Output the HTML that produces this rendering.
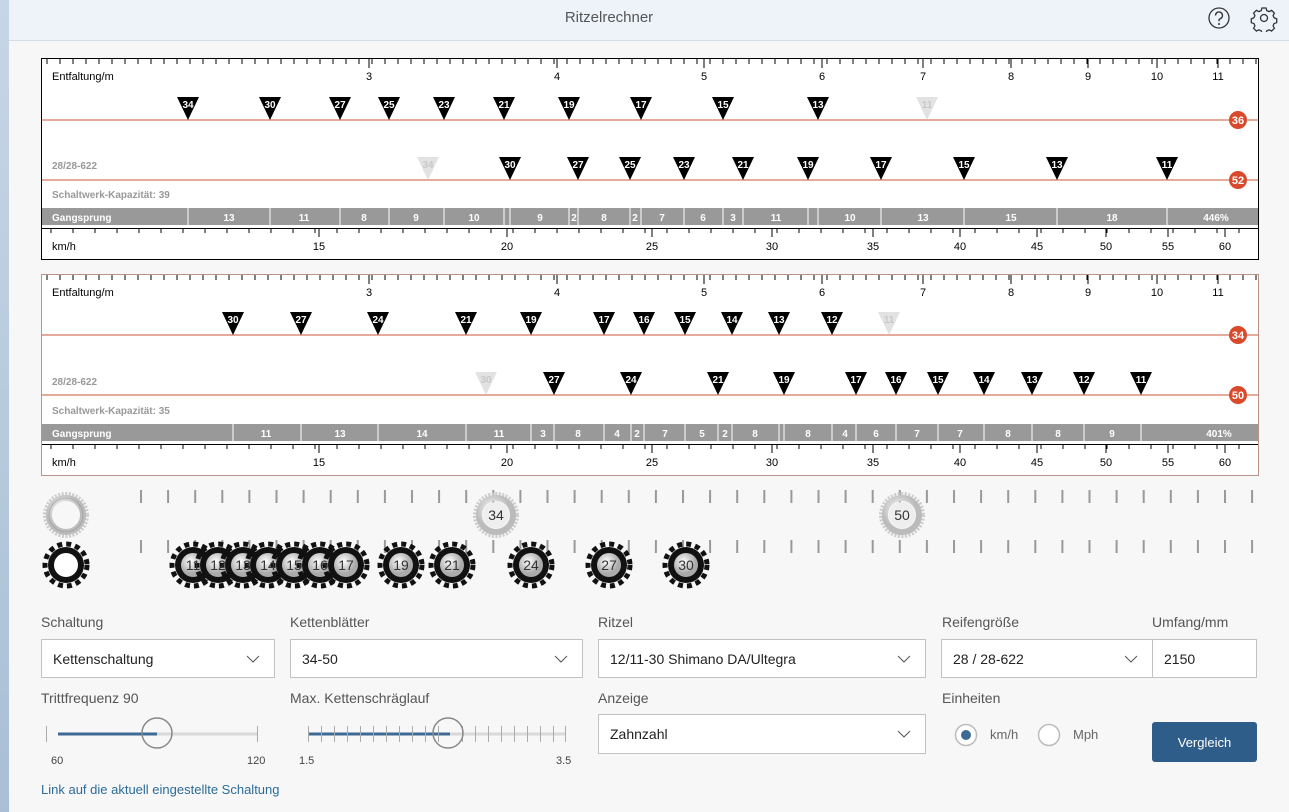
<!DOCTYPE html>
<html><head><meta charset="utf-8">
<style>
*{box-sizing:border-box;margin:0;padding:0}
body{width:1289px;height:812px;overflow:hidden;background:#f7f7f7;font-family:"Liberation Sans",sans-serif;position:relative}
.strip{position:absolute;left:0;top:0;width:9px;height:812px;background:linear-gradient(#c7d6e6,#a9bfd6)}
.hdr{position:absolute;left:9px;top:0;width:1280px;height:41px;background:#eef3f9;border-bottom:1px solid #d5dde6}
.hdr .t{position:absolute;left:0;width:1200px;text-align:center;top:9px;font-size:15px;color:#555}
.lbl{position:absolute;font-size:14px;color:#555}
.sel{position:absolute;background:#fff;border:1px solid #c2c2c2;font-size:14px;color:#222;padding:0 11px;display:flex;align-items:center}
.sel svg{position:absolute;right:14px;top:50%;margin-top:-4px}
.small{position:absolute;font-size:11px;color:#444}
</style></head><body>
<div class="strip"></div>
<div class="hdr"><div class="t">Ritzelrechner</div>
<svg style="position:absolute;left:1198px;top:6px" width="80" height="26" viewBox="0 0 80 26">
<circle cx="12" cy="12" r="10" fill="none" stroke="#333" stroke-width="1.3"/>
<path d="M8.5 9.5a3.5 3.5 0 1 1 4.5 3.3c-.8.3-1 .9-1 1.7v.8" fill="none" stroke="#333" stroke-width="1.4"/>
<circle cx="12" cy="18" r="1" fill="#333"/>
<g transform="translate(57,12)" fill="none" stroke="#333" stroke-width="1.3">
<circle r="3.5"/>
<path d="M-2 -10h4l.8 2.6 2.4 1 2.4-1.3 2.8 2.8-1.3 2.4 1 2.4 2.6.8v4l-2.6.8-1 2.4 1.3 2.4-2.8 2.8-2.4-1.3-2.4 1-.8 2.6h-4l-.8-2.6-2.4-1-2.4 1.3-2.8-2.8 1.3-2.4-1-2.4-2.6-.8v-4l2.6-.8 1-2.4-1.3-2.4 2.8-2.8 2.4 1.3 2.4-1z"/>
</g></svg>
</div>

<svg style="position:absolute;left:0;top:0" width="1289" height="600" viewBox="0 0 1289 600" font-family="Liberation Sans, sans-serif">
<defs>
<pattern id="tt" x="41" y="0" width="13" height="600" patternUnits="userSpaceOnUse"><line x1="6" y1="0" x2="6" y2="600" stroke="#000" stroke-width="1"/></pattern>
<pattern id="bt" x="41" y="0" width="22" height="600" patternUnits="userSpaceOnUse"><line x1="10" y1="0" x2="10" y2="600" stroke="#000" stroke-width="1"/></pattern>
<pattern id="gt" x="140" y="0" width="27.1" height="600" patternUnits="userSpaceOnUse"><rect x="0" y="0" width="2" height="600" fill="#999"/></pattern>
<radialGradient id="ring" cx="40%" cy="35%"><stop offset="0" stop-color="#fff"/><stop offset="1" stop-color="#bbb"/></radialGradient>
<radialGradient id="hub" cx="40%" cy="35%"><stop offset="0" stop-color="#fff"/><stop offset="1" stop-color="#aaa"/></radialGradient>
<polygon id="tri" points="-11,0 11,0 0,23"/>
</defs>

<!-- CHART 1 -->
<rect x="41.5" y="58.5" width="1217" height="201" fill="#fff" stroke="#000"/>
<rect x="42" y="59" width="1216" height="5" fill="url(#tt)"/>
<g stroke="#000"><line x1="369" y1="59" x2="369" y2="68"/><line x1="557" y1="59" x2="557" y2="68"/><line x1="704" y1="59" x2="704" y2="68"/><line x1="822" y1="59" x2="822" y2="68"/><line x1="923" y1="59" x2="923" y2="68"/><line x1="1011" y1="59" x2="1011" y2="68"/><line x1="1088" y1="59" x2="1088" y2="68"/><line x1="1157" y1="59" x2="1157" y2="68"/><line x1="1218" y1="59" x2="1218" y2="68"/></g>
<g font-size="11" fill="#000" text-anchor="middle"><text x="369" y="80">3</text><text x="557" y="80">4</text><text x="704" y="80">5</text><text x="822" y="80">6</text><text x="923" y="80">7</text><text x="1011" y="80">8</text><text x="1088" y="80">9</text><text x="1157" y="80">10</text><text x="1218" y="80">11</text></g>
<text x="52" y="80" font-size="11">Entfaltung/m</text>
<line x1="42" y1="120" x2="1258" y2="120" stroke="#c8553a"/>
<line x1="42" y1="180" x2="1258" y2="180" stroke="#c8553a"/>
<g fill="#000"><use href="#tri" x="188" y="97"/><use href="#tri" x="270" y="97"/><use href="#tri" x="340" y="97"/><use href="#tri" x="389" y="97"/><use href="#tri" x="444" y="97"/><use href="#tri" x="504" y="97"/><use href="#tri" x="569" y="97"/><use href="#tri" x="641" y="97"/><use href="#tri" x="723" y="97"/><use href="#tri" x="818" y="97"/>
<use href="#tri" x="510" y="157"/><use href="#tri" x="578" y="157"/><use href="#tri" x="630" y="157"/><use href="#tri" x="684" y="157"/><use href="#tri" x="743" y="157"/><use href="#tri" x="808" y="157"/><use href="#tri" x="881" y="157"/><use href="#tri" x="964" y="157"/><use href="#tri" x="1057" y="157"/><use href="#tri" x="1167" y="157"/></g>
<g fill="#e2e2e2"><use href="#tri" x="927" y="97"/><use href="#tri" x="428" y="157"/></g>
<g font-size="10" font-weight="bold" fill="#fff" text-anchor="middle">
<text x="188" y="108">34</text><text x="270" y="108">30</text><text x="340" y="108">27</text><text x="389" y="108">25</text><text x="444" y="108">23</text><text x="504" y="108">21</text><text x="569" y="108">19</text><text x="641" y="108">17</text><text x="723" y="108">15</text><text x="818" y="108">13</text><text x="927" y="108" fill="#c8c8c8">11</text>
<text x="428" y="168" fill="#c8c8c8">34</text><text x="510" y="168">30</text><text x="578" y="168">27</text><text x="630" y="168">25</text><text x="684" y="168">23</text><text x="743" y="168">21</text><text x="808" y="168">19</text><text x="881" y="168">17</text><text x="964" y="168">15</text><text x="1057" y="168">13</text><text x="1167" y="168">11</text></g>
<circle cx="1238" cy="120" r="9" fill="#d9492b"/><circle cx="1238" cy="180" r="9" fill="#d9492b"/>
<g font-size="11" font-weight="bold" fill="#fff" text-anchor="middle"><text x="1238" y="124">36</text><text x="1238" y="184">52</text></g>
<text x="52" y="169" font-size="10" font-weight="bold" fill="#999">28/28-622</text>
<text x="52" y="198" font-size="10" font-weight="bold" fill="#999">Schaltwerk-Kapazität: 39</text>
<rect x="42" y="208" width="1216" height="17" fill="#999"/>
<g stroke="#fff"><line x1="188" y1="208" x2="188" y2="225"/><line x1="270" y1="208" x2="270" y2="225"/><line x1="340" y1="208" x2="340" y2="225"/><line x1="389" y1="208" x2="389" y2="225"/><line x1="444" y1="208" x2="444" y2="225"/><line x1="504" y1="208" x2="504" y2="225"/><line x1="510" y1="208" x2="510" y2="225"/><line x1="569" y1="208" x2="569" y2="225"/><line x1="578" y1="208" x2="578" y2="225"/><line x1="630" y1="208" x2="630" y2="225"/><line x1="641" y1="208" x2="641" y2="225"/><line x1="684" y1="208" x2="684" y2="225"/><line x1="723" y1="208" x2="723" y2="225"/><line x1="743" y1="208" x2="743" y2="225"/><line x1="808" y1="208" x2="808" y2="225"/><line x1="818" y1="208" x2="818" y2="225"/><line x1="881" y1="208" x2="881" y2="225"/><line x1="964" y1="208" x2="964" y2="225"/><line x1="1057" y1="208" x2="1057" y2="225"/><line x1="1167" y1="208" x2="1167" y2="225"/></g>
<g font-size="10" font-weight="bold" fill="#fff" text-anchor="middle"><text x="229" y="221">13</text><text x="304" y="221">11</text><text x="364" y="221">8</text><text x="416" y="221">9</text><text x="474" y="221">10</text><text x="540" y="221">9</text><text x="574" y="221">2</text><text x="604" y="221">8</text><text x="635" y="221">2</text><text x="662" y="221">7</text><text x="703" y="221">6</text><text x="733" y="221">3</text><text x="776" y="221">11</text><text x="850" y="221">10</text><text x="923" y="221">13</text><text x="1011" y="221">15</text><text x="1112" y="221">18</text><text x="1216" y="221">446%</text></g>
<text x="52" y="221" font-size="10" font-weight="bold" fill="#fff">Gangsprung</text>
<line x1="42" y1="228.5" x2="1258" y2="228.5" stroke="#000"/>
<rect x="42" y="229" width="1216" height="4" fill="url(#bt)"/>
<g stroke="#000"><line x1="319" y1="229" x2="319" y2="237"/><line x1="507" y1="229" x2="507" y2="237"/><line x1="652" y1="229" x2="652" y2="237"/><line x1="772" y1="229" x2="772" y2="237"/><line x1="873" y1="229" x2="873" y2="237"/><line x1="960" y1="229" x2="960" y2="237"/><line x1="1037" y1="229" x2="1037" y2="237"/><line x1="1106" y1="229" x2="1106" y2="237"/><line x1="1168" y1="229" x2="1168" y2="237"/><line x1="1225" y1="229" x2="1225" y2="237"/></g>
<g font-size="11" text-anchor="middle"><text x="319" y="250">15</text><text x="507" y="250">20</text><text x="652" y="250">25</text><text x="772" y="250">30</text><text x="873" y="250">35</text><text x="960" y="250">40</text><text x="1037" y="250">45</text><text x="1106" y="250">50</text><text x="1168" y="250">55</text><text x="1225" y="250">60</text></g>
<text x="52" y="250" font-size="11">km/h</text>

<!-- CHART 2 -->
<rect x="41.5" y="274.5" width="1217" height="201" fill="#fff" stroke="#7a2a1a" stroke-dasharray="1 1"/>
<rect x="42" y="275" width="1216" height="5" fill="url(#tt)"/>
<g stroke="#000"><line x1="369" y1="275" x2="369" y2="284"/><line x1="557" y1="275" x2="557" y2="284"/><line x1="704" y1="275" x2="704" y2="284"/><line x1="822" y1="275" x2="822" y2="284"/><line x1="923" y1="275" x2="923" y2="284"/><line x1="1011" y1="275" x2="1011" y2="284"/><line x1="1088" y1="275" x2="1088" y2="284"/><line x1="1157" y1="275" x2="1157" y2="284"/><line x1="1218" y1="275" x2="1218" y2="284"/></g>
<g font-size="11" fill="#000" text-anchor="middle"><text x="369" y="296">3</text><text x="557" y="296">4</text><text x="704" y="296">5</text><text x="822" y="296">6</text><text x="923" y="296">7</text><text x="1011" y="296">8</text><text x="1088" y="296">9</text><text x="1157" y="296">10</text><text x="1218" y="296">11</text></g>
<text x="52" y="296" font-size="11">Entfaltung/m</text>
<line x1="42" y1="335" x2="1258" y2="335" stroke="#c8553a"/>
<line x1="42" y1="395" x2="1258" y2="395" stroke="#c8553a"/>
<g fill="#000"><use href="#tri" x="233" y="312"/><use href="#tri" x="301" y="312"/><use href="#tri" x="378" y="312"/><use href="#tri" x="466" y="312"/><use href="#tri" x="531" y="312"/><use href="#tri" x="604" y="312"/><use href="#tri" x="644" y="312"/><use href="#tri" x="685" y="312"/><use href="#tri" x="732" y="312"/><use href="#tri" x="779" y="312"/><use href="#tri" x="832" y="312"/>
<use href="#tri" x="554" y="372"/><use href="#tri" x="631" y="372"/><use href="#tri" x="718" y="372"/><use href="#tri" x="784" y="372"/><use href="#tri" x="856" y="372"/><use href="#tri" x="896" y="372"/><use href="#tri" x="938" y="372"/><use href="#tri" x="984" y="372"/><use href="#tri" x="1032" y="372"/><use href="#tri" x="1084" y="372"/><use href="#tri" x="1141" y="372"/></g>
<g fill="#e2e2e2"><use href="#tri" x="889" y="312"/><use href="#tri" x="486" y="372"/></g>
<g font-size="10" font-weight="bold" fill="#fff" text-anchor="middle">
<text x="233" y="323">30</text><text x="301" y="323">27</text><text x="378" y="323">24</text><text x="466" y="323">21</text><text x="531" y="323">19</text><text x="604" y="323">17</text><text x="644" y="323">16</text><text x="685" y="323">15</text><text x="732" y="323">14</text><text x="779" y="323">13</text><text x="832" y="323">12</text><text x="889" y="323" fill="#c8c8c8">11</text>
<text x="486" y="383" fill="#c8c8c8">30</text><text x="554" y="383">27</text><text x="631" y="383">24</text><text x="718" y="383">21</text><text x="784" y="383">19</text><text x="856" y="383">17</text><text x="896" y="383">16</text><text x="938" y="383">15</text><text x="984" y="383">14</text><text x="1032" y="383">13</text><text x="1084" y="383">12</text><text x="1141" y="383">11</text></g>
<circle cx="1238" cy="335" r="9" fill="#d9492b"/><circle cx="1238" cy="395" r="9" fill="#d9492b"/>
<g font-size="11" font-weight="bold" fill="#fff" text-anchor="middle"><text x="1238" y="339">34</text><text x="1238" y="399">50</text></g>
<text x="52" y="385" font-size="10" font-weight="bold" fill="#999">28/28-622</text>
<text x="52" y="414" font-size="10" font-weight="bold" fill="#999">Schaltwerk-Kapazität: 35</text>
<rect x="42" y="424" width="1216" height="17" fill="#999"/>
<g stroke="#fff"><line x1="233" y1="424" x2="233" y2="441"/><line x1="301" y1="424" x2="301" y2="441"/><line x1="378" y1="424" x2="378" y2="441"/><line x1="466" y1="424" x2="466" y2="441"/><line x1="531" y1="424" x2="531" y2="441"/><line x1="554" y1="424" x2="554" y2="441"/><line x1="604" y1="424" x2="604" y2="441"/><line x1="631" y1="424" x2="631" y2="441"/><line x1="644" y1="424" x2="644" y2="441"/><line x1="685" y1="424" x2="685" y2="441"/><line x1="718" y1="424" x2="718" y2="441"/><line x1="732" y1="424" x2="732" y2="441"/><line x1="779" y1="424" x2="779" y2="441"/><line x1="784" y1="424" x2="784" y2="441"/><line x1="832" y1="424" x2="832" y2="441"/><line x1="856" y1="424" x2="856" y2="441"/><line x1="896" y1="424" x2="896" y2="441"/><line x1="938" y1="424" x2="938" y2="441"/><line x1="984" y1="424" x2="984" y2="441"/><line x1="1032" y1="424" x2="1032" y2="441"/><line x1="1084" y1="424" x2="1084" y2="441"/><line x1="1141" y1="424" x2="1141" y2="441"/></g>
<g font-size="10" font-weight="bold" fill="#fff" text-anchor="middle"><text x="266" y="437">11</text><text x="340" y="437">13</text><text x="422" y="437">14</text><text x="499" y="437">11</text><text x="543" y="437">3</text><text x="578" y="437">8</text><text x="617" y="437">4</text><text x="637" y="437">2</text><text x="665" y="437">7</text><text x="702" y="437">5</text><text x="725" y="437">2</text><text x="755" y="437">8</text><text x="808" y="437">8</text><text x="845" y="437">4</text><text x="876" y="437">6</text><text x="917" y="437">7</text><text x="960" y="437">7</text><text x="1008" y="437">8</text><text x="1058" y="437">8</text><text x="1112" y="437">9</text><text x="1219" y="437">401%</text></g>
<text x="52" y="437" font-size="10" font-weight="bold" fill="#fff">Gangsprung</text>
<line x1="42" y1="444.5" x2="1258" y2="444.5" stroke="#000"/>
<rect x="42" y="445" width="1216" height="4" fill="url(#bt)"/>
<g stroke="#000"><line x1="319" y1="445" x2="319" y2="453"/><line x1="507" y1="445" x2="507" y2="453"/><line x1="652" y1="445" x2="652" y2="453"/><line x1="772" y1="445" x2="772" y2="453"/><line x1="873" y1="445" x2="873" y2="453"/><line x1="960" y1="445" x2="960" y2="453"/><line x1="1037" y1="445" x2="1037" y2="453"/><line x1="1106" y1="445" x2="1106" y2="453"/><line x1="1168" y1="445" x2="1168" y2="453"/><line x1="1225" y1="445" x2="1225" y2="453"/></g>
<g font-size="11" text-anchor="middle"><text x="319" y="466">15</text><text x="507" y="466">20</text><text x="652" y="466">25</text><text x="772" y="466">30</text><text x="873" y="466">35</text><text x="960" y="466">40</text><text x="1037" y="466">45</text><text x="1106" y="466">50</text><text x="1168" y="466">55</text><text x="1225" y="466">60</text></g>
<text x="52" y="466" font-size="11">km/h</text>

<!-- GEARS -->
<rect x="140" y="490" width="1120" height="13" fill="url(#gt)"/>
<rect x="140" y="540" width="1120" height="13" fill="url(#gt)"/>
<g fill="none">
<g transform="translate(66,515)"><circle r="21" stroke="#ccc" stroke-width="4" stroke-dasharray="2 1.5"/><circle r="17" stroke="url(#ring)" stroke-width="6"/><circle r="17" stroke="#999" stroke-width="0.6"/></g>
<g transform="translate(496,515)"><circle r="21" stroke="#ccc" stroke-width="4" stroke-dasharray="2 1.5"/><circle r="17" stroke="url(#ring)" stroke-width="6"/><circle r="13" fill="#eee"/></g>
<g transform="translate(902,515)"><circle r="21" stroke="#ccc" stroke-width="4" stroke-dasharray="2 1.5"/><circle r="17" stroke="url(#ring)" stroke-width="6"/><circle r="13" fill="#eee"/></g>
</g>
<g font-size="14" fill="#333" text-anchor="middle"><text x="496" y="520">34</text><text x="902" y="520">50</text></g>
<g>
<g transform="translate(66,565)"><circle r="21" fill="none" stroke="#111" stroke-width="5" stroke-dasharray="5 4"/><circle r="18" fill="#111"/><circle r="12" fill="#fff"/></g>
<g transform="translate(193,565)"><circle r="21" fill="none" stroke="#111" stroke-width="5" stroke-dasharray="5 4"/><circle r="18" fill="#111"/><circle r="12" fill="url(#hub)"/></g>
<g transform="translate(218,565)"><circle r="21" fill="none" stroke="#111" stroke-width="5" stroke-dasharray="5 4"/><circle r="18" fill="#111"/><circle r="12" fill="url(#hub)"/></g>
<g transform="translate(243,565)"><circle r="21" fill="none" stroke="#111" stroke-width="5" stroke-dasharray="5 4"/><circle r="18" fill="#111"/><circle r="12" fill="url(#hub)"/></g>
<g transform="translate(268,565)"><circle r="21" fill="none" stroke="#111" stroke-width="5" stroke-dasharray="5 4"/><circle r="18" fill="#111"/><circle r="12" fill="url(#hub)"/></g>
<g transform="translate(294,565)"><circle r="21" fill="none" stroke="#111" stroke-width="5" stroke-dasharray="5 4"/><circle r="18" fill="#111"/><circle r="12" fill="url(#hub)"/></g>
<g transform="translate(320,565)"><circle r="21" fill="none" stroke="#111" stroke-width="5" stroke-dasharray="5 4"/><circle r="18" fill="#111"/><circle r="12" fill="url(#hub)"/></g>
<g transform="translate(346,565)"><circle r="21" fill="none" stroke="#111" stroke-width="5" stroke-dasharray="5 4"/><circle r="18" fill="#111"/><circle r="12" fill="url(#hub)"/></g>
<g transform="translate(401,565)"><circle r="21" fill="none" stroke="#111" stroke-width="5" stroke-dasharray="5 4"/><circle r="18" fill="#111"/><circle r="12" fill="url(#hub)"/></g>
<g transform="translate(452,565)"><circle r="21" fill="none" stroke="#111" stroke-width="5" stroke-dasharray="5 4"/><circle r="18" fill="#111"/><circle r="12" fill="url(#hub)"/></g>
<g transform="translate(531,565)"><circle r="21" fill="none" stroke="#111" stroke-width="5" stroke-dasharray="5 4"/><circle r="18" fill="#111"/><circle r="12" fill="url(#hub)"/></g>
<g transform="translate(609,565)"><circle r="21" fill="none" stroke="#111" stroke-width="5" stroke-dasharray="5 4"/><circle r="18" fill="#111"/><circle r="12" fill="url(#hub)"/></g>
<g transform="translate(686,565)"><circle r="21" fill="none" stroke="#111" stroke-width="5" stroke-dasharray="5 4"/><circle r="18" fill="#111"/><circle r="12" fill="url(#hub)"/></g>
</g>
<g font-size="14" fill="#333" text-anchor="middle"><text x="193" y="570">11</text><text x="218" y="570">12</text><text x="243" y="570">13</text><text x="268" y="570">14</text><text x="294" y="570">15</text><text x="320" y="570">16</text><text x="346" y="570">17</text><text x="401" y="570">19</text><text x="452" y="570">21</text><text x="531" y="570">24</text><text x="609" y="570">27</text><text x="686" y="570">30</text></g>
</svg>

<!-- FORM -->
<div class="lbl" style="left:41px;top:614px">Schaltung</div>
<div class="lbl" style="left:290px;top:614px">Kettenblätter</div>
<div class="lbl" style="left:598px;top:614px">Ritzel</div>
<div class="lbl" style="left:942px;top:614px">Reifengröße</div>
<div class="lbl" style="left:1152px;top:614px">Umfang/mm</div>
<div class="sel" style="left:41px;top:639px;width:234px;height:39px">Kettenschaltung<svg width="14" height="8"><path d="M1 1l6 6 6-6" fill="none" stroke="#555"/></svg></div>
<div class="sel" style="left:290px;top:639px;width:293px;height:39px">34-50<svg width="14" height="8"><path d="M1 1l6 6 6-6" fill="none" stroke="#555"/></svg></div>
<div class="sel" style="left:598px;top:639px;width:328px;height:39px">12/11-30 Shimano DA/Ultegra<svg width="14" height="8"><path d="M1 1l6 6 6-6" fill="none" stroke="#555"/></svg></div>
<div class="sel" style="left:941px;top:639px;width:212px;height:39px">28 / 28-622<svg width="14" height="8"><path d="M1 1l6 6 6-6" fill="none" stroke="#555"/></svg></div>
<div class="sel" style="left:1152px;top:639px;width:105px;height:39px">2150</div>

<div class="lbl" style="left:41px;top:690px">Trittfrequenz 90</div>
<div class="lbl" style="left:290px;top:690px">Max. Kettenschräglauf</div>
<div class="lbl" style="left:598px;top:690px">Anzeige</div>
<div class="lbl" style="left:942px;top:690px">Einheiten</div>
<div class="sel" style="left:598px;top:714px;width:328px;height:40px">Zahnzahl<svg width="14" height="8"><path d="M1 1l6 6 6-6" fill="none" stroke="#555"/></svg></div>

<svg style="position:absolute;left:0;top:710px" width="1289" height="60">
<line x1="58" y1="24" x2="257" y2="24" stroke="#d9d9d9" stroke-width="3"/>
<line x1="58" y1="24" x2="157" y2="24" stroke="#3d6a94" stroke-width="3"/>
<line x1="46.5" y1="16" x2="46.5" y2="32" stroke="#aaa"/><line x1="257.5" y1="16" x2="257.5" y2="32" stroke="#aaa"/>
<circle cx="157" cy="23" r="15" fill="none" stroke="#888" stroke-width="1.5"/>
<line x1="308" y1="24" x2="565" y2="24" stroke="#d9d9d9" stroke-width="3"/>
<line x1="308" y1="24" x2="450" y2="24" stroke="#3d6a94" stroke-width="3"/>
<g stroke="#aaa"><line x1="308.5" y1="16" x2="308.5" y2="32"/><line x1="321.5" y1="16" x2="321.5" y2="32"/><line x1="334.5" y1="16" x2="334.5" y2="32"/><line x1="347.5" y1="16" x2="347.5" y2="32"/><line x1="360.5" y1="16" x2="360.5" y2="32"/><line x1="373.5" y1="16" x2="373.5" y2="32"/><line x1="386.5" y1="16" x2="386.5" y2="32"/><line x1="399.5" y1="16" x2="399.5" y2="32"/><line x1="412.5" y1="16" x2="412.5" y2="32"/><line x1="425.5" y1="16" x2="425.5" y2="32"/><line x1="438.5" y1="16" x2="438.5" y2="32"/><line x1="462.5" y1="16" x2="462.5" y2="32"/><line x1="475.5" y1="16" x2="475.5" y2="32"/><line x1="488.5" y1="16" x2="488.5" y2="32"/><line x1="501.5" y1="16" x2="501.5" y2="32"/><line x1="514.5" y1="16" x2="514.5" y2="32"/><line x1="527.5" y1="16" x2="527.5" y2="32"/><line x1="540.5" y1="16" x2="540.5" y2="32"/><line x1="553.5" y1="16" x2="553.5" y2="32"/><line x1="565.5" y1="16" x2="565.5" y2="32"/></g>
<circle cx="448" cy="23" r="15" fill="none" stroke="#888" stroke-width="1.5"/>
<circle cx="966" cy="25" r="10.5" fill="#fff" stroke="#bbb" stroke-width="1.5"/><circle cx="966" cy="25" r="5" fill="#3d6a94"/>
<circle cx="1049" cy="25" r="10.5" fill="#fff" stroke="#bbb" stroke-width="1.5"/>
</svg>
<div class="small" style="left:51px;top:755px">60</div>
<div class="small" style="left:247px;top:755px">120</div>
<div class="small" style="left:299px;top:755px">1.5</div>
<div class="small" style="left:556px;top:755px">3.5</div>
<div class="lbl" style="left:990px;top:727px;color:#666;font-size:13px">km/h</div>
<div class="lbl" style="left:1073px;top:727px;color:#666;font-size:13px">Mph</div>
<div style="position:absolute;left:1152px;top:722px;width:105px;height:40px;background:#2f5d8a;border-radius:3px;color:#fff;font-size:13px;display:flex;align-items:center;justify-content:center">Vergleich</div>
<div class="lbl" style="left:41px;top:782px;color:#2b6c99;font-size:13px">Link auf die aktuell eingestellte Schaltung</div>
</body></html>
